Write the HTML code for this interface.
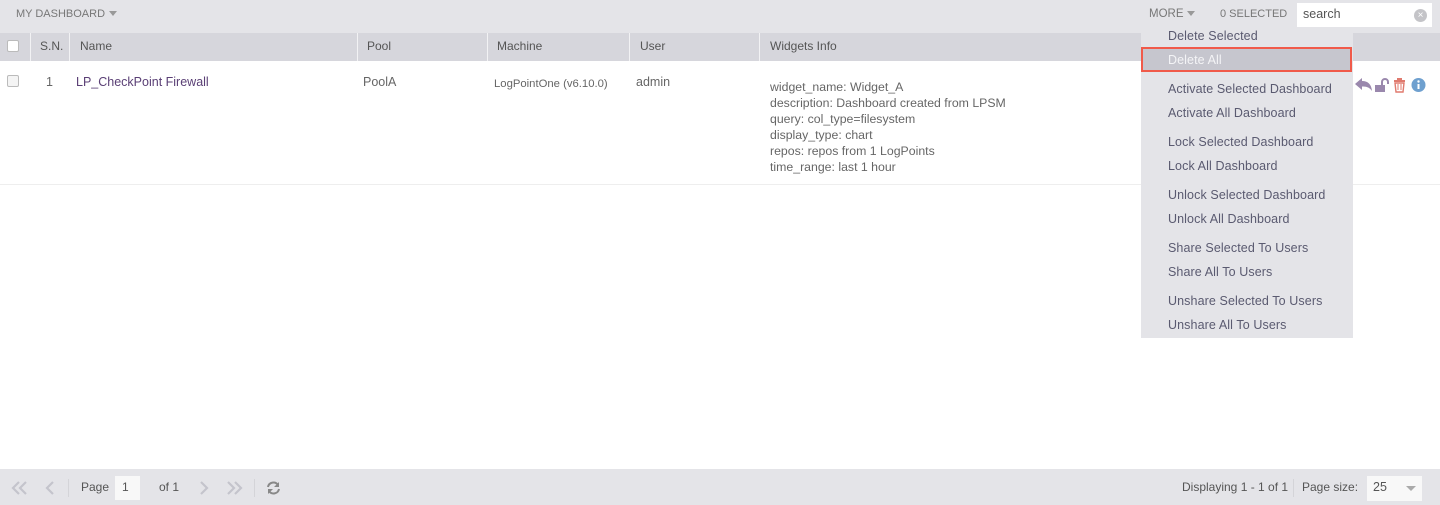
<!DOCTYPE html>
<html><head><meta charset="utf-8"><style>
*{box-sizing:border-box;margin:0;padding:0}
body{width:1440px;height:505px;overflow:hidden;background:#fff;font-family:"Liberation Sans",sans-serif;color:#555;position:relative;font-size:12px}
.a{position:absolute;white-space:nowrap}
.top{left:0;top:0;width:1440px;height:33px;background:#e4e4e8}
.hdr{left:0;top:33px;width:1440px;height:28px;background:#d6d6dc}
.sep{position:absolute;top:33px;width:1px;height:28px;background:#f2f2f4}
.h{top:39px;font-size:12px;color:#555}
.foot{left:0;top:469px;width:1440px;height:36px;background:#e4e4e8}
.cb{width:12px;height:12px;border:1px solid #bbb;background:#f4f4f4;border-radius:2px}
.menu{left:1141px;top:27px;width:212px;height:311px;background:#e4e4e8}
.mi{left:1168px;font-size:12.5px;color:#5a5a70;letter-spacing:0.1px}
.info{left:770px;top:79px;font-size:12.3px;line-height:16px;color:#666;white-space:pre}
</style></head><body>
<div class="a top"></div>
<div class="a" style="left:16px;top:8px;font-size:11px;color:#777">MY DASHBOARD</div>
<div class="a" style="left:109px;top:11px;width:0;height:0;border-left:4px solid transparent;border-right:4px solid transparent;border-top:5px solid #999"></div>
<div class="a" style="left:1149px;top:8px;font-size:11.5px;color:#777">MORE</div>
<div class="a" style="left:1187px;top:11px;width:0;height:0;border-left:4px solid transparent;border-right:4px solid transparent;border-top:5px solid #999"></div>
<div class="a" style="left:1220px;top:8px;font-size:11px;color:#777">0 SELECTED</div>
<div class="a" style="left:1297px;top:3px;width:135px;height:24px;background:#fff"></div>
<div class="a" style="left:1303px;top:7px;font-size:12.5px;color:#555">search</div>
<div class="a" style="left:1414px;top:9px;width:13px;height:13px;border-radius:50%;background:#c4c4c8;color:#fff;font-size:10px;line-height:13px;text-align:center">×</div>

<div class="a hdr"></div>
<div class="sep" style="left:30px"></div><div class="sep" style="left:69px"></div><div class="sep" style="left:357px"></div><div class="sep" style="left:487px"></div><div class="sep" style="left:629px"></div><div class="sep" style="left:759px"></div>
<div class="a cb" style="left:7px;top:40px;background:#fff"></div>
<div class="a h" style="left:40px">S.N.</div>
<div class="a h" style="left:80px">Name</div>
<div class="a h" style="left:367px">Pool</div>
<div class="a h" style="left:497px">Machine</div>
<div class="a h" style="left:640px">User</div>
<div class="a h" style="left:770px">Widgets Info</div>

<div class="a cb" style="left:7px;top:75px"></div>
<div class="a" style="left:46px;top:75px;font-size:12.5px;color:#666">1</div>
<div class="a" style="left:76px;top:75px;font-size:12.5px;color:#5a3f75">LP_CheckPoint Firewall</div>
<div class="a" style="left:363px;top:75px;font-size:12.5px;color:#666">PoolA</div>
<div class="a" style="left:494px;top:78px;font-size:11.3px;color:#666">LogPointOne (v6.10.0)</div>
<div class="a" style="left:636px;top:75px;font-size:12.5px;color:#666">admin</div>
<div class="a info">widget_name: Widget_A
description: Dashboard created from LPSM
query: col_type=filesystem
display_type: chart
repos: repos from 1 LogPoints
time_range: last 1 hour</div>
<div class="a" style="left:0;top:184px;width:1440px;height:1px;background:#eee"></div>

<svg class="a" style="left:1355px;top:77px" width="72" height="17" viewBox="0 0 72 17">
<path d="M0 7 L7 1 L7 4 Q16 4 17 14 Q14 9 7 9.5 L7 13 Z" fill="#9a88ad"/>
<rect x="20" y="8" width="10" height="7" fill="#9a88ad"/><path d="M27 8 V5 a3 3 0 0 1 6 0 V7" stroke="#9a88ad" stroke-width="2" fill="none"/>
<rect x="39" y="3" width="11" height="2" fill="#e07a6e"/><rect x="42" y="1" width="5" height="2" fill="#e07a6e"/><path d="M40 6 h9 l-1 9 h-7 z" fill="none" stroke="#e07a6e" stroke-width="1.4"/><path d="M43 7v6M46 7v6" stroke="#e07a6e"/>
<circle cx="63.5" cy="8" r="7" fill="#6fa0cf"/><rect x="62.5" y="7" width="2" height="5" fill="#fff"/><circle cx="63.5" cy="4.5" r="1.2" fill="#fff"/>
</svg>

<div class="a menu"></div>
<div class="a" style="left:1141px;top:47px;width:211px;height:25px;background:#c6c6ce;border:2px solid #f05a4a"></div>
<div class="a mi" style="top:29px">Delete Selected</div>
<div class="a mi" style="top:53px;color:#f4f4f6">Delete All</div>
<div class="a mi" style="top:82px">Activate Selected Dashboard</div>
<div class="a mi" style="top:106px">Activate All Dashboard</div>
<div class="a mi" style="top:135px">Lock Selected Dashboard</div>
<div class="a mi" style="top:159px">Lock All Dashboard</div>
<div class="a mi" style="top:188px">Unlock Selected Dashboard</div>
<div class="a mi" style="top:212px">Unlock All Dashboard</div>
<div class="a mi" style="top:241px">Share Selected To Users</div>
<div class="a mi" style="top:265px">Share All To Users</div>
<div class="a mi" style="top:294px">Unshare Selected To Users</div>
<div class="a mi" style="top:318px">Unshare All To Users</div>

<div class="a foot"></div>
<svg class="a" style="left:10px;top:480px" width="250" height="16" viewBox="0 0 250 16">
<g stroke="#c4c4cc" stroke-width="2.2" fill="none">
<path d="M9 2 L3 8 L9 14 M16 2 L10 8 L16 14"/>
<path d="M43 2 L37 8 L43 14"/>
<path d="M191 2 L197 8 L191 14"/>
<path d="M218 2 L224 8 L218 14 M225 2 L231 8 L225 14"/>
</g></svg>
<div class="a" style="left:68px;top:479px;width:1px;height:18px;background:#d4d4d8"></div>
<div class="a" style="left:81px;top:480px;font-size:12px">Page</div>
<div class="a" style="left:115px;top:476px;width:25px;height:24px;background:#f8f8f8"></div>
<div class="a" style="left:122px;top:480px;font-size:12px">1</div>
<div class="a" style="left:159px;top:480px;font-size:12px">of 1</div>
<div class="a" style="left:254px;top:479px;width:1px;height:18px;background:#d4d4d8"></div>
<svg class="a" style="left:266px;top:481px" width="15" height="14" viewBox="0 0 15 14"><path d="M2 6 A5.5 5.5 0 0 1 12 4 M13 8 A5.5 5.5 0 0 1 3 10" stroke="#888" stroke-width="2" fill="none"/><path d="M13 1 V6 H8 Z M2 13 V8 H7 Z" fill="#888"/></svg>
<div class="a" style="left:1182px;top:480px;font-size:12px">Displaying 1 - 1 of 1</div>
<div class="a" style="left:1293px;top:479px;width:1px;height:18px;background:#d4d4d8"></div>
<div class="a" style="left:1302px;top:480px;font-size:12px">Page size:</div>
<div class="a" style="left:1367px;top:476px;width:55px;height:25px;background:#f8f8f8"></div>
<div class="a" style="left:1373px;top:480px;font-size:12.5px">25</div>
<div class="a" style="left:1406px;top:486px;width:0;height:0;border-left:5px solid transparent;border-right:5px solid transparent;border-top:5px solid #aaa"></div>
</body></html>
